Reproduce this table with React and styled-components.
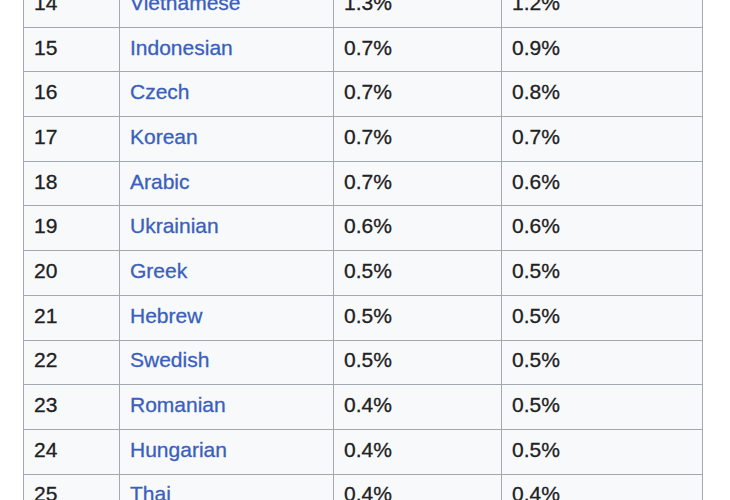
import React from 'react'
import styled, { createGlobalStyle } from 'styled-components'

const rows = [
  [14, 'Vietnamese', '1.3%', '1.2%'],
  [15, 'Indonesian', '0.7%', '0.9%'],
  [16, 'Czech', '0.7%', '0.8%'],
  [17, 'Korean', '0.7%', '0.7%'],
  [18, 'Arabic', '0.7%', '0.6%'],
  [19, 'Ukrainian', '0.6%', '0.6%'],
  [20, 'Greek', '0.5%', '0.5%'],
  [21, 'Hebrew', '0.5%', '0.5%'],
  [22, 'Swedish', '0.5%', '0.5%'],
  [23, 'Romanian', '0.4%', '0.5%'],
  [24, 'Hungarian', '0.4%', '0.5%'],
  [25, 'Thai', '0.4%', '0.4%'],
]

const widths = [96, 214, 168, 201]

const Global = createGlobalStyle`
  html, body {
    margin: 0;
    padding: 0;
    background: #ffffff;
    overflow: hidden;
  }
  body {
    font-family: "Liberation Sans", Arial, Helvetica, sans-serif;
  }
`

const Page = styled.div`
  height: 500px;
  overflow: hidden;
  padding-left: 23px;
`

const Table = styled.table`
  margin-top: -18px;
  border-collapse: collapse;
  table-layout: fixed;
  width: 679px;
  background: #f8f9fa;
  color: #202122;
  font-size: 21px;
  -webkit-text-stroke: 0.3px;
`

const Col = styled.col`
  width: ${(p) => p.$w}px;
`

const Cell = styled.td`
  border: 1px solid #a2a9b1;
  height: 38.7px;
  padding: 0 0 5px 10px;
  vertical-align: middle;
  white-space: nowrap;
  line-height: 1;
`

const Link = styled.a`
  color: #3a5fbd;
  text-decoration: none;
`

export default function App() {
  return (
    <Page>
      <Global />
      <Table>
        <colgroup>
          {widths.map((w, i) => (
            <Col key={i} $w={w} />
          ))}
        </colgroup>
        <tbody>
          {rows.map(([rank, lang, a, b]) => (
            <tr key={rank}>
              <Cell>{rank}</Cell>
              <Cell>
                <Link href="#">{lang}</Link>
              </Cell>
              <Cell>{a}</Cell>
              <Cell>{b}</Cell>
            </tr>
          ))}
        </tbody>
      </Table>
    </Page>
  )
}
